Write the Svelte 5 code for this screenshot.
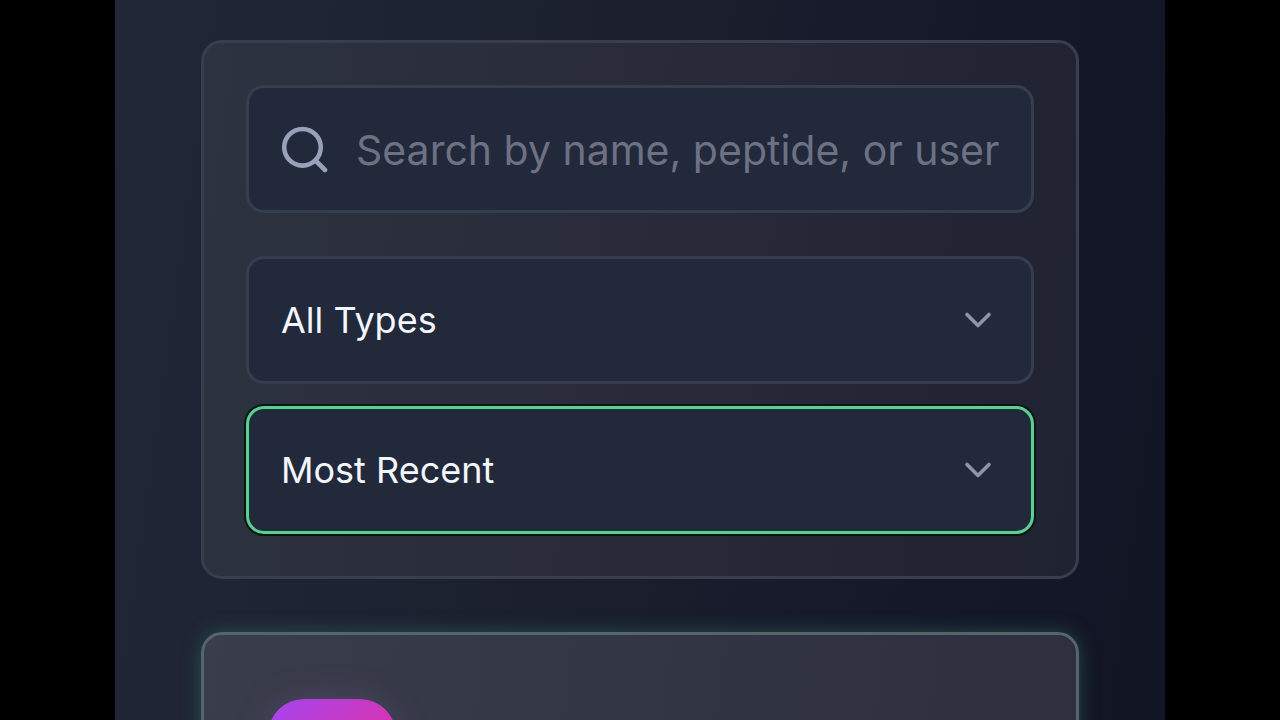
<script>
  let query = $state('');
  let type = $state('all');
  let order = $state('recent');

  const filters = [
    { id: 'type', label: 'Type', option: 'All Types', value: 'all' },
    { id: 'order', label: 'Sort order', option: 'Most Recent', value: 'recent' }
  ];
</script>

<main class="screen">
  <section class="panel filters" aria-label="Filters">
    <label class="field search">
      <svg class="lens" viewBox="0 0 48 48" aria-hidden="true">
        <circle cx="21.500" cy="22.300" r="18.300" />
        <path d="M34.500 35.500 L44 45" />
      </svg>
      <input type="text" bind:value={query} aria-label="Search" placeholder="Search by name, peptide, or username" />
    </label>

    <div class="selects">
      {#each filters as f (f.id)}
        <div class="field pick" class:active={f.id === 'order'}>
          {#if f.id === 'type'}
            <select bind:value={type} aria-label={f.label}>
              <option value={f.value}>{f.option}</option>
            </select>
          {:else}
            <select bind:value={order} aria-label={f.label}>
              <option value={f.value}>{f.option}</option>
            </select>
          {/if}
          <svg class="chevron" viewBox="0 0 28 18" aria-hidden="true">
            <path d="M3 3.500 L14 14.500 L25 3.500" />
          </svg>
        </div>
      {/each}
    </div>
  </section>

  <article class="panel result">
    <div class="avatar"></div>
  </article>
</main>

<style>
  :global(body) {
    background: #000;
  }

  .screen {
    box-sizing: border-box;
    height: 100vh;
    overflow: hidden;
    margin: 0 115px;
    padding: 40px 86px 0;
    display: flex;
    flex-direction: column;
    gap: 53px;
    font-family: Inter, 'Liberation Sans', sans-serif;
    background: linear-gradient(98deg, #212737 0%, #1f2434 20%, #1a1e2d 50%, #151829 78%, #121524 100%);
  }

  .panel {
    box-sizing: border-box;
    flex: none;
    border: 3px solid #393e4c;
    border-radius: 21px;
  }

  .filters {
    padding: 42px;
    display: flex;
    flex-direction: column;
    gap: 43px;
    background: linear-gradient(98deg, #2d3340 0%, #2b2e3b 28%, #272938 60%, #222433 85%, #202332 100%);
  }

  .selects {
    display: flex;
    flex-direction: column;
    gap: 22px;
  }

  .field {
    box-sizing: border-box;
    height: 128px;
    border: 3px solid #343e4f;
    border-radius: 18px;
    background: #21293b;
  }

  .search {
    display: flex;
    align-items: center;
    gap: 27px;
    padding: 0 32px;
  }

  .lens {
    flex: none;
    width: 48px;
    height: 48px;
    fill: none;
    stroke: #97a2ba;
    stroke-width: 4.6;
    stroke-linecap: round;
  }

  input,
  select {
    box-sizing: border-box;
    min-width: 0;
    margin: 0;
    border: 0;
    outline: 0;
    background: transparent;
    font-family: inherit;
  }

  input {
    flex: 1;
    height: 64px;
    padding: 2px 0 0;
    font-size: 41px;
    color: #f3f6fc;
  }

  input::placeholder {
    color: #6d7183;
    opacity: 1;
  }

  .pick {
    display: grid;
    align-items: center;
  }

  select {
    grid-area: 1 / 1;
    width: 100%;
    height: 100%;
    padding: 0 96px 0 32px;
    appearance: none;
    font-size: 36px;
    color: #f3f6fc;
  }

  .chevron {
    grid-area: 1 / 1;
    justify-self: end;
    width: 28px;
    height: 18px;
    margin-right: 39px;
    pointer-events: none;
    fill: none;
    stroke: #8e95a6;
    stroke-width: 3.6;
    stroke-linecap: round;
    stroke-linejoin: round;
  }

  .active {
    border-color: #61cb98;
    box-shadow: 0 0 0 2px #03190f, inset 0 0 0 1px #0b3b30;
  }

  .result {
    padding: 64px;
    border-color: #56646b;
    background: linear-gradient(98deg, #3a3d4b 0%, #333645 45%, #2d2f3e 100%);
    box-shadow: 0 0 18px #2c6b5a99;
  }

  .avatar {
    width: 128px;
    height: 128px;
    border-radius: 36px;
    background: linear-gradient(135deg, #a544f2 0%, #d634ae 60%, #ec4899 100%);
    box-shadow: 0 0 32px #6b5a8c66;
  }
</style>
